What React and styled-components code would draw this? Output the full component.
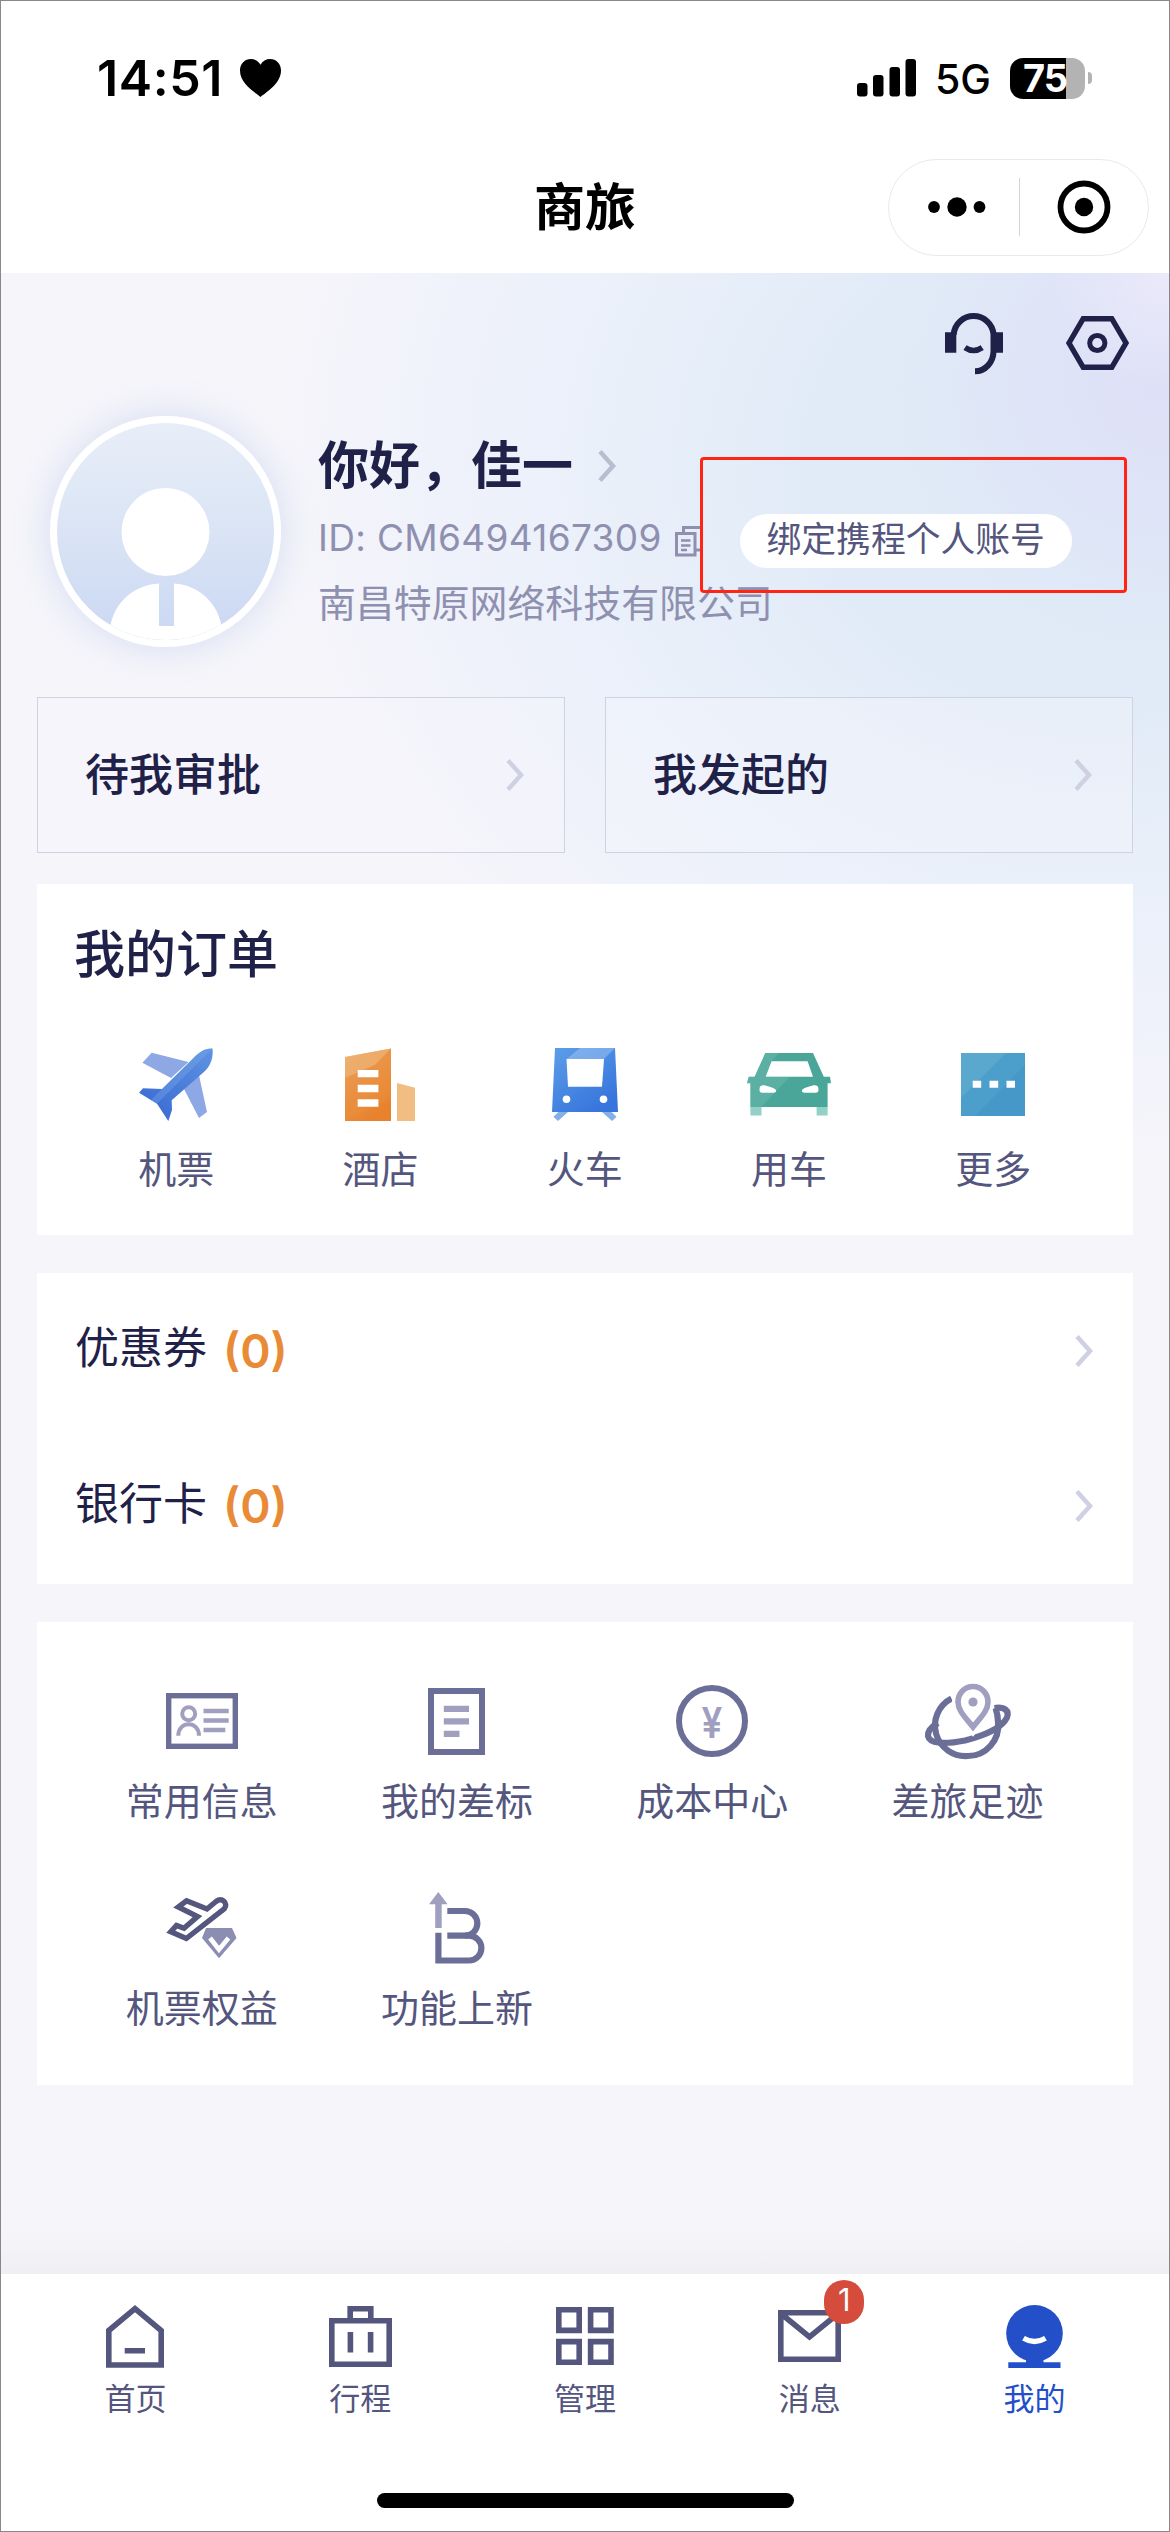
import React from "react";
import styled, { createGlobalStyle } from "styled-components";

const GlobalStyle = createGlobalStyle`
  *, *::before, *::after { box-sizing: border-box; }
  body { margin: 0; background: #fff; }
  svg { display: block; flex: none; overflow: visible; }
`;

const ink = "#1f2148";
const slate = "#54567e";
const muted = "#8f90b0";

const Screen = styled.div`
  width: 1170px;
  height: 2532px;
  border: 1px solid #88888b;
  display: flex;
  flex-direction: column;
  background: #fff;
  color: ${ink};
  font-family: Inter, "Noto Sans CJK SC", sans-serif;
  white-space: nowrap;
  overflow: hidden;
`;

const StatusBar = styled.header`
  height: 154px;
  padding: 0 77px 0 96px;
  display: flex;
  align-items: center;
  justify-content: space-between;
  color: #000;
`;

const Clock = styled.div`
  display: flex;
  align-items: center;
  gap: 17px;
  font-size: 50px;
  font-weight: 600;
  line-height: 60px;
  letter-spacing: 0.6px;
`;

const Signals = styled.div`
  display: flex;
  align-items: center;
`;

const Network = styled.span`
  margin: 0 19px 0 18px;
  padding-top: 1px;
  font-size: 41px;
  font-weight: 500;
  line-height: 48px;
`;

const Battery = styled.div`
  width: 75px;
  height: 41px;
  padding-right: 5px;
  border-radius: 13px;
  display: flex;
  align-items: center;
  justify-content: center;
  background: linear-gradient(90deg, #000 75%, #b3b3b3 75%);
  color: #fff;
  font-size: 38px;
  font-weight: 700;
  line-height: 41px;
  letter-spacing: -1px;
`;

const BatteryTip = styled.div`
  width: 4px;
  height: 12px;
  margin-left: 3px;
  border-radius: 0 4px 4px 0;
  background: #b3b3b3;
`;

const NavBar = styled.nav`
  height: 118px;
  padding: 0 20px 14px;
  display: grid;
  grid-template-columns: 1fr auto 1fr;
  align-items: center;
`;

const NavTitle = styled.h1`
  grid-column: 2;
  margin: 2px 0 0;
  color: #000;
  font-size: 51px;
  font-weight: 700;
  line-height: 60px;
`;

const Capsule = styled.div`
  justify-self: end;
  width: 261px;
  height: 97px;
  border: 1.5px solid #e9e9ea;
  border-radius: 49px;
  display: grid;
  grid-template-columns: 1fr 1fr;
  align-items: center;
  justify-items: center;
`;

const CapsuleHalf = styled.div`
  width: 100%;
  height: 58px;
  padding-left: ${(p) => p.$indent || 0}px;
  border-left: ${(p) => (p.$divided ? "1.5px solid #d3d3d3" : "0")};
  display: flex;
  align-items: center;
  justify-content: center;
`;

const Content = styled.main`
  height: 2001px;
  padding: 0 36px;
  background:
    linear-gradient(0deg, #efeff4 0, rgba(245, 245, 250, 0) 44px),
    radial-gradient(circle at 1168px 0, #ebe9fa 0, rgba(234, 232, 251, 0) 120px),
    radial-gradient(ellipse 270px 270px at 1160px 110px, #dee0f7 0, rgba(222, 225, 247, 0.75) 40%, rgba(222, 232, 247, 0) 100%),
    radial-gradient(ellipse 820px 690px at 1100px 190px, #dfebf7 0, #e1ebf7 36%, #eaf0fa 62%, #f0f2fb 82%, rgba(245, 245, 250, 0) 100%),
    #f5f5fa;
`;

const Tools = styled.div`
  height: 140px;
  padding-right: 4px;
  display: flex;
  align-items: center;
  justify-content: flex-end;
  gap: 63px;
`;

const Profile = styled.section`
  position: relative;
  height: 284px;
  padding: 3px 0 0 13px;
  display: flex;
  align-items: flex-start;
`;

const Avatar = styled.div`
  width: 231px;
  height: 231px;
  flex: none;
  border: 7px solid #fff;
  border-radius: 50%;
  overflow: hidden;
  background: linear-gradient(180deg, #e8eef8 0, #dbe5f5 45%, #cbd8f3 100%);
  box-shadow: 0 0 34px rgba(170, 186, 232, 0.42);
`;

const Identity = styled.div`
  margin-left: 37px;
  padding-top: 20px;
  flex: 1;
`;

const NameRow = styled.div`
  display: flex;
  align-items: center;
  gap: 25px;
  font-size: 51px;
  font-weight: 700;
  line-height: 60px;
`;

const IdRow = styled.div`
  height: 56px;
  margin-top: 14px;
  display: flex;
  align-items: center;
  color: ${muted};
  font-size: 37px;
  letter-spacing: 0.32px;
  line-height: 56px;
`;

const CopyMark = styled.span`
  width: 27px;
  margin: 6px 38px 0 13px;
  overflow: hidden;
`;

const BindButton = styled.button`
  width: 332px;
  height: 54px;
  margin-top: 5px;
  padding: 0 0 3px;
  border: 0;
  border-radius: 27px;
  background: #fff;
  color: ${slate};
  font: 400 34.8px/50px Inter, "Noto Sans CJK SC", sans-serif;
`;

const Company = styled.div`
  margin-top: 12px;
  color: ${muted};
  font-size: 37.9px;
  line-height: 50px;
`;

const Highlight = styled.div`
  position: absolute;
  left: 663px;
  top: 44px;
  width: 427px;
  height: 136px;
  border: 3px solid #ff2515;
  border-radius: 4px;
  pointer-events: none;
`;

const Shortcuts = styled.section`
  display: grid;
  grid-template-columns: 1fr 1fr;
  gap: 40px;
  margin-bottom: 31px;
`;

const Shortcut = styled.a`
  height: 156px;
  padding: 0 40px 0 47px;
  border: 1.5px solid #cfd2e0;
  display: flex;
  align-items: center;
  justify-content: space-between;
  background: rgba(246, 246, 252, 0.35);
  font-size: 44px;
  font-weight: 500;
  line-height: 60px;
`;

const Card = styled.section`
  height: ${(p) => p.$height}px;
  margin-bottom: 38px;
  padding: ${(p) => p.$pad || "0"};
  background: #fff;
`;

const CardTitle = styled.h2`
  margin: 0 0 62px;
  font-size: 51px;
  font-weight: 500;
  line-height: 60px;
`;

const OrderGrid = styled.div`
  display: grid;
  grid-template-columns: repeat(5, 204.3px);
`;

const ServiceGrid = styled.div`
  display: grid;
  grid-template-columns: repeat(4, 255.3px);
  row-gap: 64px;
`;

const Entry = styled.a`
  display: flex;
  flex-direction: column;
  align-items: center;
  color: ${slate};
  font-size: 38px;
  line-height: 50px;
`;

const EntryIcon = styled.span`
  height: ${(p) => p.$height}px;
  margin-bottom: ${(p) => p.$gap}px;
  display: flex;
  align-items: center;
`;

const WalletRow = styled.a`
  height: 155.5px;
  padding: 0 40px 0 38px;
  display: flex;
  align-items: center;
  font-size: 44px;
  line-height: 60px;
`;

const WalletName = styled.span`
  padding-bottom: 5px;
`;

const WalletCount = styled.span`
  margin-left: 16px;
  flex: 1;
  color: #e98a37;
  font-size: 46px;
  font-weight: 600;
`;

const TabBar = styled.footer`
  flex: 1;
  padding: 30px 22px 23px;
  display: flex;
  flex-direction: column;
  align-items: center;
  justify-content: space-between;
  background: #fff;
`;

const Tabs = styled.div`
  width: 100%;
  display: grid;
  grid-template-columns: repeat(5, 1fr);
`;

const Tab = styled.a`
  display: flex;
  flex-direction: column;
  align-items: center;
  color: ${(p) => (p.$active ? "#2350c8" : slate)};
  font-size: 31px;
  line-height: 40px;
`;

const TabIcon = styled.span`
  position: relative;
  height: 64px;
  margin-bottom: 11px;
  display: flex;
  align-items: center;
`;

const Badge = styled.span`
  position: absolute;
  left: 46px;
  top: -24px;
  width: 40px;
  height: 44px;
  border-radius: 20px;
  background: #d54c3c;
  color: #fff;
  font-size: 31px;
  line-height: 39px;
  text-align: center;
`;

const HomeIndicator = styled.div`
  width: 417px;
  height: 15px;
  border-radius: 8px;
  background: #000;
`;

const Chevron = ({ color = "#cfd0e2" }) => (
  <svg width="18" height="32" viewBox="0 0 18 32" fill="none" stroke={color} strokeWidth="4.5">
    <path d="M2 1.5 L15 16 L2 30.5" />
  </svg>
);

const HeadsetIcon = () => (
  <svg width="58" height="64" viewBox="0 0 58 64" fill="none" stroke={ink} strokeWidth="6">
    <path d="M8.7 24 V23 A20 20 0 0 1 48.5 23 V40 A18.5 20.3 0 0 1 30 60.3" />
    <path d="M0 21.3 H11.3 V41.7 H0 Z M46 21.3 H58 V41.7 H46 Z" fill={ink} stroke="none" />
    <path d="M20 36.6 Q28.6 42.4 37.2 36.6" strokeWidth="5.6" />
  </svg>
);

const SettingsIcon = () => (
  <svg width="63" height="54" viewBox="0 0 63 54" fill="none" stroke={ink} strokeWidth="5.4">
    <path d="M3 27 L17.2 2.7 H45.8 L60 27 L45.8 51.3 H17.2 Z" />
    <circle cx="31.3" cy="27" r="7.6" strokeWidth="5" />
  </svg>
);

const PersonArt = () => (
  <svg width="217" height="217" viewBox="0 0 217 217" fill="#fff">
    <circle cx="108.5" cy="109" r="44" />
    <path d="M52 217 C52 180 77 162 102 160.5 V203 H117 V160.5 C141 162 166 180 166 217 Z" />
  </svg>
);

const CopyIcon = () => (
  <svg width="30" height="31" viewBox="0 0 30 31" fill="none" stroke={muted} strokeWidth="3">
    <path d="M1.5 7.5 H20 V29 H1.5 Z M8.5 6 V1.5 H28.5 V24 H21" />
    <path d="M6 14.5 H15.5 M6 19.5 H15.5 M6 24 H12" strokeWidth="2.6" />
  </svg>
);

const SignalIcon = () => (
  <svg width="60" height="38" viewBox="0 0 60 38">
    <rect x="0" y="24" width="10.5" height="13.5" rx="3" />
    <rect x="16" y="16" width="10.5" height="21.5" rx="3" />
    <rect x="32.5" y="8" width="10.5" height="29.5" rx="3" />
    <rect x="48.5" y="0" width="10.5" height="37.5" rx="3" />
  </svg>
);

const HeartIcon = () => (
  <svg width="41" height="38" viewBox="0 0 41 38">
    <path d="M20.5 38 C13 32 0 24 0 11.5 C0 4.5 5 0 10.8 0 C15 0 18.5 2 20.5 5.8 C22.5 2 26 0 30.2 0 C36 0 41 4.5 41 11.5 C41 24 28 32 20.5 38 Z" />
  </svg>
);

const PlaneIcon = () => (
  <svg width="74" height="73" viewBox="0 0 74 73">
    <defs>
      <linearGradient id="plane" x1="1" y1="0" x2="0.2" y2="1">
        <stop offset="0" stopColor="#5e93e2" />
        <stop offset="1" stopColor="#396bd3" />
      </linearGradient>
    </defs>
    <path d="M12.7 4.7 L3.4 14.7 L32 30 L49.5 14 Z M59.5 25 L68 64 L60 70 L45 41 Z" fill="#8da8e5" />
    <path d="M23 41 L54 10.5 C60 4 66 0 73.5 .5 C74.5 9 72 17 66 23 L32.7 52.3 L33 62 L29.3 73 L18 55.7 L0 44.7 L4 40.2 Z" fill="url(#plane)" />
    <path d="M23 41 L54 10.5 C60 4 66 0 73.5 .5 L18 55.7 L12 52 Z" fill="#7fabe8" opacity="0.35" />
  </svg>
);

const HotelIcon = () => (
  <svg width="70" height="73" viewBox="0 0 70 73">
    <defs>
      <linearGradient id="hotel" x1="0" y1="0" x2="0.6" y2="1">
        <stop offset="0" stopColor="#eaa25c" />
        <stop offset="1" stopColor="#e8812c" />
      </linearGradient>
    </defs>
    <path d="M0 9 L46 .5 V73 H0 Z" fill="url(#hotel)" />
    <path d="M0 9 L46 .5 L30 17 L0 30 Z" fill="#f0bb83" opacity="0.55" />
    <path d="M46 .5 V50 L0 73 L30 18 Z" fill="#f09b45" opacity="0.2" />
    <path d="M12.7 22 H33.4 V29.3 H12.7 Z M12.7 36.7 H33.4 V44.3 H12.7 Z M12.7 51.3 H33.4 V58.7 H12.7 Z" fill="#fff" />
    <path d="M52 35 L70 39.7 V73 H52 Z" fill="#f2bd83" />
  </svg>
);

const TrainIcon = () => (
  <svg width="66" height="73" viewBox="0 0 66 73">
    <defs>
      <linearGradient id="train" x1="0" y1="0" x2="0.7" y2="1">
        <stop offset="0" stopColor="#5c9ee8" />
        <stop offset="1" stopColor="#3774dc" />
      </linearGradient>
    </defs>
    <path d="M6.5 64 L1.4 68.7 L6 73 L16 64 Z M59.5 64 L64.6 68.7 L60 73 L50 64 Z" fill="#82b1ea" />
    <path d="M3 0 H63 L66 64 H0 Z" fill="url(#train)" />
    <path d="M28 0 H63 L52 11 H14.5 Z" fill="#9dc2f0" opacity="0.55" />
    <path d="M14.5 11 H52 L50 38.7 H16 Z" fill="#fff" />
    <circle cx="14.5" cy="51.3" r="3.8" fill="#fff" />
    <circle cx="51.5" cy="51.3" r="3.8" fill="#fff" />
  </svg>
);

const CarIcon = () => (
  <svg width="84" height="63" viewBox="0 0 84 63">
    <path d="M3.4 54 H14.5 V62.5 H3.4 Z M69.6 54 H80.6 V62.5 H69.6 Z" fill="#93d0c5" />
    <path fillRule="evenodd" d="M18.3 0 H66 L76.8 23.7 H83 L84 30.3 H80.6 V54 H3.4 V30.3 H0 L1.7 23.7 H7.6 Z M24.5 8.3 L18.6 23.7 H66 L60.6 8.3 Z" fill="#4aa698" />
    <path d="M18.3 0 H32 L24.5 8.3 L18.6 23.7 H43 L14 54 H3.4 V30.3 H0 L1.7 23.7 H7.6 Z" fill="#7cc4b7" opacity="0.35" />
    <path d="M12.5 36 C12.5 32 16 32 19 32.7 C24 34 28 35.5 29 37 C29.5 39.7 27 39.7 24 39.7 H16 C13 39.7 12.5 39 12.5 36 Z M71.5 36 C71.5 32 68 32 65 32.7 C60 34 56 35.5 55 37 C54.5 39.7 57 39.7 60 39.7 H68 C71 39.7 71.5 39 71.5 36 Z" fill="#fff" />
  </svg>
);

const MoreIcon = () => (
  <svg width="64" height="63" viewBox="0 0 64 63">
    <path d="M0 0 H64 V63 H0 Z" fill="#4598c8" />
    <path d="M0 0 H45 L0 45 Z" fill="#76bcd8" opacity="0.45" />
    <path d="M45 0 H64 V12 L14 63 H0 V45 Z" fill="#5aa9d2" opacity="0.35" />
    <path d="M11.7 27.7 H20.2 V34.7 H11.7 Z M28.5 27.7 H37.2 V34.7 H28.5 Z M45.5 27.7 H54 V34.7 H45.5 Z" fill="#fff" />
  </svg>
);

const line = "#6b6f97";
const soft = "#a19fbf";

const IdCardIcon = () => (
  <svg width="72" height="56" viewBox="0 0 72 56" fill="none" stroke={soft} strokeWidth="4">
    <rect x="2.7" y="2.7" width="66.6" height="50.6" stroke={line} strokeWidth="5.4" />
    <circle cx="22.7" cy="20.7" r="6.5" />
    <path d="M12.3 42.7 C12.3 27.5 33 27.5 33 42.7" />
    <path d="M37.5 18 H62.7 M37.5 27.5 H62.7 M37.5 37 H59.3" strokeWidth="4.6" />
  </svg>
);

const PolicyIcon = () => (
  <svg width="57" height="67" viewBox="0 0 57 67" fill="none">
    <rect x="3" y="3" width="51" height="61" stroke={line} strokeWidth="6" />
    <path d="M15.8 20.8 H41 M15.8 33.3 H41 M15.8 45.8 H31.5" stroke={soft} strokeWidth="6.2" />
  </svg>
);

const CoinIcon = () => (
  <svg width="72" height="72" viewBox="0 0 72 72" fill="none">
    <circle cx="36" cy="36" r="33" stroke={line} strokeWidth="6" />
    <text transform="translate(36 52.5) scale(0.86 1)" textAnchor="middle" fontFamily="Inter" fontWeight="600" fontSize="43" fill={soft}>¥</text>
  </svg>
);

const PlanetIcon = () => (
  <svg width="86" height="75" viewBox="0 0 86 75" fill="none" stroke={line} strokeWidth="6.2">
    <path d="M26.5 14.5 A30.5 30.5 0 0 0 43 72 A30.5 30.5 0 0 0 73 38 Q73 31 70.5 24" />
    <path d="M69.5 24 C80 22.5 84.5 27 82 33.5 C77 44 58 52 40 56.5 C20 60.5 4.5 60 3 52 C2.5 47 6 43 13 39" />
    <path d="M48 43 C41 34 33 27 33 18 A15 15.5 0 0 1 63 18 C63 27 55 34 48 43 Z" stroke="#fff" strokeWidth="12" />
    <path d="M48 43 C41 34 33 27 33 18 A15 15.5 0 0 1 63 18 C63 27 55 34 48 43 Z" stroke={soft} strokeWidth="5.6" fill="#fff" />
    <circle cx="48" cy="18" r="4.6" fill={soft} stroke="none" />
  </svg>
);

const PerksIcon = () => (
  <svg width="71" height="62" viewBox="0 0 71 62" fill="none">
    <path d="M20.5 3.8 L41 12 L50 4.5 C56 0 62.5 6 58.5 11.5 L20.3 41.5 L4.8 34.8 L10.5 28.5 L18 31.2 L31.5 19.5 L12.3 10 Z" stroke={slate} strokeWidth="5.4" />
    <path d="M40 31 H66 L70.5 41 L53 61.3 L36 41 Z" fill="#8b8db2" />
    <path d="M44 41 L53 52.5 L62.5 41" stroke="#fff" strokeWidth="4.6" />
  </svg>
);

const UpgradeIcon = () => (
  <svg width="56" height="72" viewBox="0 0 56 72" fill="none" stroke={line} strokeWidth="6.2">
    <path d="M9.3 0 L18.6 12.3 H12.7 V36 H6.2 V12.3 H0 Z" fill={soft} stroke="none" />
    <path d="M18.3 19 H36 A12.3 12.3 0 0 1 36 43.7 H18.3" />
    <path d="M36 43.7 H40 A12.4 12.4 0 0 1 40 68.5 H9.4 V40.7" />
  </svg>
);

const HomeIcon = () => (
  <svg width="58" height="63" viewBox="0 0 58 63" fill="none" stroke={slate} strokeWidth="5.6">
    <path d="M2.8 25.5 L29 3.7 L55.2 25.5 V60 H2.8 Z M18.7 45.8 H39" />
  </svg>
);

const TripIcon = () => (
  <svg width="63" height="61" viewBox="0 0 63 61" fill="none" stroke={slate} strokeWidth="5.6">
    <path d="M2.8 14.8 H60.2 V58.2 H2.8 Z M21.2 14 V2.8 H41.8 V14 M21.4 26 V46.5 M41.6 26 V46.5" />
  </svg>
);

const ManageIcon = () => (
  <svg width="58" height="58" viewBox="0 0 58 58" fill="none" stroke={slate} strokeWidth="5.6">
    <path d="M2.8 2.8 H23.2 V23.4 H2.8 Z M34.6 2.8 H55 V23.4 H34.6 Z M2.8 34.6 H23.2 V55.2 H2.8 Z M34.6 34.6 H55 V55.2 H34.6 Z" />
  </svg>
);

const MailIcon = () => (
  <svg width="63" height="52" viewBox="0 0 63 52" fill="none" stroke={slate} strokeWidth="5.6">
    <path d="M2.8 2.8 H60.2 V49.2 H2.8 Z M4 4.5 L31.5 27 L59 4.5" />
  </svg>
);

const MineIcon = () => (
  <svg width="57" height="63" viewBox="0 0 57 63" fill="#2350c8">
    <circle cx="28.5" cy="28.3" r="28.3" />
    <path d="M20 50 H37.5 V57.3 H54.5 V63 H2.3 V57.3 H20 Z" />
    <path d="M17.5 33.3 Q28.5 39.8 39.5 33.3" fill="none" stroke="#fff" strokeWidth="5.4" />
  </svg>
);

const orders = [
  ["机票", PlaneIcon],
  ["酒店", HotelIcon],
  ["火车", TrainIcon],
  ["用车", CarIcon],
  ["更多", MoreIcon],
];

const services = [
  ["常用信息", IdCardIcon],
  ["我的差标", PolicyIcon],
  ["成本中心", CoinIcon],
  ["差旅足迹", PlanetIcon],
  ["机票权益", PerksIcon],
  ["功能上新", UpgradeIcon],
];

const tabs = [
  ["首页", HomeIcon],
  ["行程", TripIcon],
  ["管理", ManageIcon],
  ["消息", MailIcon, 1],
  ["我的", MineIcon],
];

export default function App() {
  return (
    <Screen lang="zh-CN">
      <GlobalStyle />
      <StatusBar>
        <Clock>
          14:51
          <HeartIcon />
        </Clock>
        <Signals>
          <SignalIcon />
          <Network>5G</Network>
          <Battery>75</Battery>
          <BatteryTip />
        </Signals>
      </StatusBar>
      <NavBar>
        <NavTitle>商旅</NavTitle>
        <Capsule>
          <CapsuleHalf $indent={6}>
            <svg width="58" height="20" viewBox="0 0 58 20">
              <circle cx="6" cy="10" r="5.9" />
              <circle cx="29" cy="10" r="9.7" />
              <circle cx="51.5" cy="10" r="5.9" />
            </svg>
          </CapsuleHalf>
          <CapsuleHalf $divided>
            <svg width="54" height="54" viewBox="0 0 54 54">
              <circle cx="27" cy="27" r="23.5" fill="none" stroke="#000" strokeWidth="5.8" />
              <circle cx="27" cy="27" r="9.2" />
            </svg>
          </CapsuleHalf>
        </Capsule>
      </NavBar>

      <Content>
        <Tools>
          <HeadsetIcon />
          <SettingsIcon />
        </Tools>

        <Profile>
          <Avatar>
            <PersonArt />
          </Avatar>
          <Identity>
            <NameRow>
              你好，佳一
              <Chevron color="#b9bdd0" />
            </NameRow>
            <IdRow>
              ID: CM6494167309
              <CopyMark>
                <CopyIcon />
              </CopyMark>
              <BindButton>绑定携程个人账号</BindButton>
            </IdRow>
            <Company>南昌特原网络科技有限公司</Company>
          </Identity>
          <Highlight />
        </Profile>

        <Shortcuts>
          <Shortcut>
            待我审批
            <Chevron />
          </Shortcut>
          <Shortcut>
            我发起的
            <Chevron />
          </Shortcut>
        </Shortcuts>

        <Card $height={351} $pad="41px 37px 0">
          <CardTitle>我的订单</CardTitle>
          <OrderGrid>
            {orders.map(([name, Icon]) => (
              <Entry key={name}>
                <EntryIcon $height={75} $gap={22}>
                  <Icon />
                </EntryIcon>
                {name}
              </Entry>
            ))}
          </OrderGrid>
        </Card>

        <Card $height={311}>
          {["优惠券", "银行卡"].map((name) => (
            <WalletRow key={name}>
              <WalletName>{name}</WalletName>
              <WalletCount>(0)</WalletCount>
              <Chevron />
            </WalletRow>
          ))}
        </Card>

        <Card $height={463} $pad="61px 37px 0">
          <ServiceGrid>
            {services.map(([name, Icon]) => (
              <Entry key={name}>
                <EntryIcon $height={76} $gap={17}>
                  <Icon />
                </EntryIcon>
                {name}
              </Entry>
            ))}
          </ServiceGrid>
        </Card>
      </Content>

      <TabBar>
        <Tabs>
          {tabs.map(([name, Icon, count]) => (
            <Tab key={name} $active={name === "我的"}>
              <TabIcon>
                <Icon />
                {count && <Badge>{count}</Badge>}
              </TabIcon>
              {name}
            </Tab>
          ))}
        </Tabs>
        <HomeIndicator />
      </TabBar>
    </Screen>
  );
}
